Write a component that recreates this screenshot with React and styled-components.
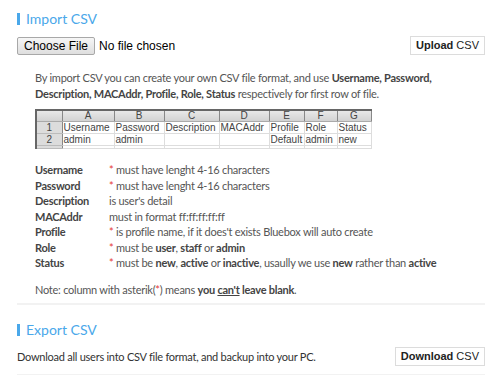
import styled, { createGlobalStyle } from 'styled-components';

const GlobalStyle = createGlobalStyle`
  html, body {
    margin: 0;
    padding: 0;
    background: #fff;
  }
  body {
    width: 500px;
    height: 375px;
    overflow: hidden;
    font-family: Lato, "Open Sans", sans-serif;
    color: #555;
  }
`

const columns = [
  { key: 'A', width: 52, head: 'Username', val: 'admin' },
  { key: 'B', width: 50, head: 'Password', val: 'admin' },
  { key: 'C', width: 55, head: 'Description', val: '' },
  { key: 'D', width: 50, head: 'MACAddr', val: '' },
  { key: 'E', width: 35, head: 'Profile', val: 'Default' },
  { key: 'F', width: 33, head: 'Role', val: 'admin' },
  { key: 'G', width: 34, head: 'Status', val: 'new' },
]

const Star = () => <Red>*</Red>

const rules = [
  { label: 'Username', text: <><Star /> must have lenght 4-16 characters</> },
  { label: 'Password', text: <><Star /> must have lenght 4-16 characters</> },
  { label: 'Description', text: <>is user's detail</> },
  { label: 'MACAddr', text: <>must in format ff:ff:ff:ff:ff</> },
  { label: 'Profile', text: <><Star /> is profile name, if it does't exists Bluebox will auto create</> },
  { label: 'Role', text: <><Star /> must be <b>user</b>, <b>staff</b> or <b>admin</b></> },
  { label: 'Status', text: <><Star /> must be <b>new</b>, <b>active</b> or <b>inactive</b>, usaully we use <b>new</b> rather than <b>active</b></> },
]

const App = () => {
  return (
    <Page>
      <GlobalStyle />
      <Section $bottom={5}>
        <Title>Import CSV</Title>
        <ActionRow>
          <FilePicker>
            <ChooseButton>Choose File</ChooseButton>
            <FileName>No file chosen</FileName>
          </FilePicker>
          <Button><b>Upload</b> CSV</Button>
        </ActionRow>

        <Info>
          <Intro>
            By import CSV you can create your own CSV file format, and use <b>Username, Password,
            Description, MACAddr, Profile, Role, Status</b> respectively for first row of file.
          </Intro>

          <Sheet>
            <colgroup>
              <col style={{ width: 26 }} />
              {columns.map(c => <col key={c.key} style={{ width: c.width }} />)}
            </colgroup>
            <thead>
              <tr>
                <HeadCell />
                {columns.map(c => <HeadCell key={c.key}>{c.key}</HeadCell>)}
              </tr>
            </thead>
            <tbody>
              <tr>
                <RowNum>1</RowNum>
                {columns.map(c => <Cell key={c.key}>{c.head}</Cell>)}
              </tr>
              <tr>
                <RowNum>2</RowNum>
                {columns.map(c => <Cell key={c.key}>{c.val}</Cell>)}
              </tr>
              <tr>
                <RowNum $stub />
                {columns.map(c => <Cell key={c.key} $stub />)}
              </tr>
            </tbody>
          </Sheet>

          <Rules>
            {rules.map(r => (
              <Rule key={r.label}>
                <RuleLabel>{r.label}</RuleLabel>
                <RuleText>{r.text}</RuleText>
              </Rule>
            ))}
          </Rules>

          <Note>
            Note: column with asterik(<Red>*</Red>) means <b>you <u>can't</u> leave blank</b>.
          </Note>
        </Info>
      </Section>

      <Section $top={6} $bottom={8}>
        <Title>Export CSV</Title>
        <ActionRow>
          <Plain>Download all users into CSV file format, and backup into your PC.</Plain>
          <Button><b>Download</b> CSV</Button>
        </ActionRow>
      </Section>
    </Page>
  )
}

const Page = styled.div`
  padding: 0 15px 0 17px;
`

const Section = styled.section`
  border-bottom: 2px solid #f2f2f2;
  padding-top: ${p => p.$top || 0}px;
  padding-bottom: ${p => p.$bottom}px;
`

const Title = styled.h3`
  margin: 0;
  padding: 9px 0 0 9px;
  font-size: 14px;
  font-weight: 400;
  line-height: 20px;
  color: #4aa8ea;
  position: relative;
  &::before {
    content: '';
    position: absolute;
    left: 0;
    top: 13px;
    width: 3px;
    height: 12px;
    background: #4aa8ea;
  }
`

const ActionRow = styled.div`
  display: flex;
  justify-content: space-between;
  align-items: center;
  margin-top: 7px;
`

const FilePicker = styled.div`
  display: flex;
  align-items: center;
  gap: 4px;
  font-family: "Liberation Sans", Arial, sans-serif;
  font-size: 12px;
  color: #000;
`

const ChooseButton = styled.span`
  display: inline-block;
  padding: 1px 6px;
  height: 14px;
  line-height: 14px;
  border: 1px solid #a8a8a8;
  border-radius: 2px;
  background: linear-gradient(#f6f6f6, #dedede);
  color: #000;
`

const FileName = styled.span``

const Button = styled.span`
  display: inline-block;
  padding: 0 5px;
  height: 17px;
  line-height: 17px;
  border: 1px solid #dcdcdc;
  background: #fff;
  font-family: "Liberation Sans", Arial, sans-serif;
  font-size: 11px;
  color: #222;
  b { font-weight: 700; }
`

const Info = styled.div`
  padding: 15px 0 0 18px;
  letter-spacing: -0.25px;
`

const Intro = styled.p`
  margin: 0;
  font-size: 11px;
  line-height: 16px;
  b { color: #444; }
`

const Sheet = styled.table`
  margin-top: 7px;
  border-collapse: collapse;
  table-layout: fixed;
  width: 335px;
  font-family: "Liberation Sans", Arial, sans-serif;
  font-size: 10px;
  letter-spacing: 0;
  color: #444;
  border-top: 2px solid #666;
  border-left: 2px solid #666;
`

const HeadCell = styled.th`
  height: 10px;
  padding: 0;
  font-weight: 400;
  line-height: 10px;
  background: linear-gradient(#e8e8e8, #d2d2d2);
  border-right: 1px solid #888;
  border-bottom: 1px solid #aaa;
  text-align: center;
`

const RowNum = styled.td`
  height: ${p => p.$stub ? '2px' : '11px'};
  padding: 0;
  line-height: 11px;
  text-align: center;
  background: #dcdcdc;
  border-right: 1px solid #888;
  border-bottom: 1px solid #bbb;
`

const Cell = styled.td`
  height: ${p => p.$stub ? '2px' : '11px'};
  padding: 0 1px;
  line-height: 11px;
  white-space: nowrap;
  overflow: hidden;
  border-right: 1px solid #ddd;
  border-bottom: 1px solid #ddd;
`

const Rules = styled.div`
  margin-top: 13px;
  display: grid;
  grid-template-columns: 74px 1fr;
  font-size: 11px;
  line-height: 15.5px;
`

const Rule = styled.div`
  display: contents;
`

const RuleLabel = styled.span`
  font-weight: 700;
  color: #444;
`

const RuleText = styled.span`
  b { color: #444; }
`

const Red = styled.span`
  color: #e53935;
`

const Note = styled.p`
  margin: 11px 0 0;
  font-size: 11px;
  line-height: 16px;
  b { color: #444; }
`

const Plain = styled.span`
  font-size: 11px;
  letter-spacing: -0.25px;
  color: #333;
`

export default App;
